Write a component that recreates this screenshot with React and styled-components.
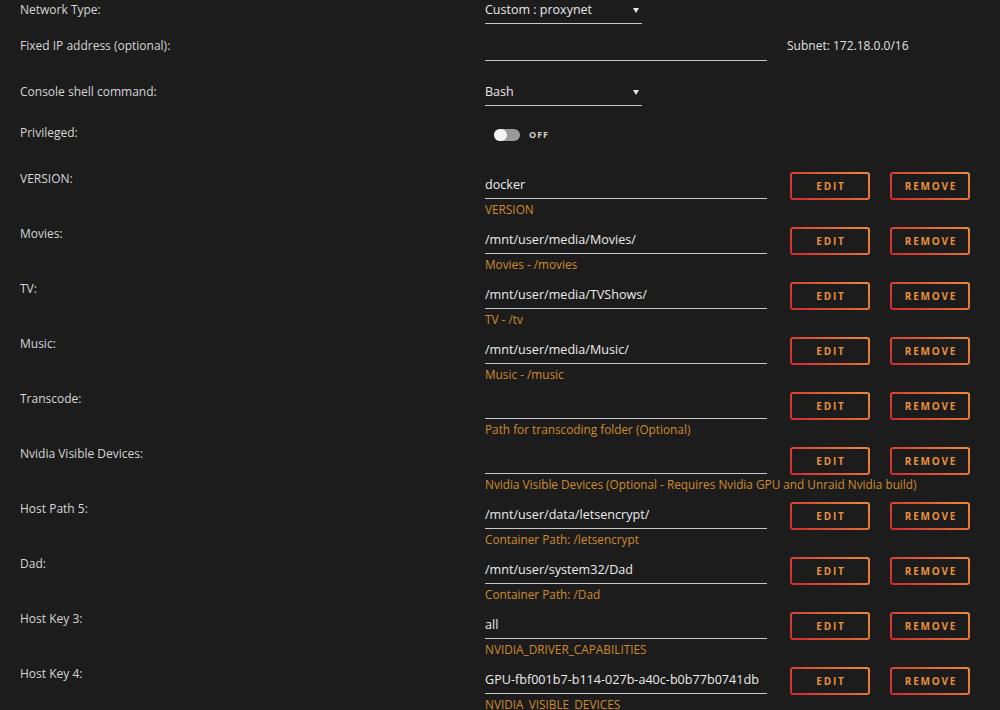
import React from 'react';
import styled, { createGlobalStyle } from 'styled-components';

const GlobalStyle = createGlobalStyle`
  body {
    margin: 0;
    background: #1c1c1c;
    font-family: 'Open Sans', 'DejaVu Sans', sans-serif;
    color: #d6d6d6;
  }
`;

const Page = styled.div`
  width: 1000px;
  height: 710px;
  overflow: hidden;
  background: #1c1c1c;
`;

const Row = styled.div`
  display: flex;
  align-items: flex-start;
  height: ${(p) => p.$h}px;
`;

const Label = styled.div`
  width: 485px;
  padding-left: 20px;
  box-sizing: border-box;
  font-size: 12px;
  line-height: 20px;
  color: #d6d6d6;
  flex-shrink: 0;
`;

const Field = styled.div`
  display: flex;
  flex-direction: column;
  width: ${(p) => p.$w || 282}px;
  flex-shrink: 0;
`;

const Select = styled.div`
  position: relative;
  width: 157px;
  height: 24px;
  box-sizing: border-box;
  border-bottom: 1px solid #c8c8c8;
  font-size: 12.5px;
  line-height: 20px;
  color: #e8e8e8;
  &::after {
    content: '';
    position: absolute;
    right: 3px;
    top: 8px;
    border-left: 3px solid transparent;
    border-right: 3px solid transparent;
    border-top: 5px solid #e8e8e8;
  }
`;

const Input = styled.div`
  height: ${(p) => p.$h || 30}px;
  box-sizing: border-box;
  padding-top: ${(p) => p.$pt ?? 6}px;
  border-bottom: 1px solid #c8c8c8;
  font-size: 12.6px;
  line-height: 20px;
  color: #ececec;
  white-space: nowrap;
`;

const Desc = styled.div`
  margin-top: 2px;
  font-size: 11.8px;
  line-height: 16px;
  color: #d08a2c;
  white-space: nowrap;
`;

const Subnet = styled.div`
  margin-left: 20px;
  font-size: 12px;
  line-height: 20px;
  color: #e0e0e0;
`;

const Toggle = styled.div`
  display: flex;
  align-items: center;
  gap: 9px;
  margin-left: 9px;
  margin-top: 5px;
`;

const Track = styled.div`
  position: relative;
  width: 26px;
  height: 12px;
  border-radius: 6px;
  background: #9a9a9a;
  &::before {
    content: '';
    position: absolute;
    left: 0;
    top: 0;
    width: 13px;
    height: 12px;
    border-radius: 6px;
    background: #f4f4f4;
  }
`;

const ToggleText = styled.span`
  font-size: 9px;
  font-weight: 700;
  letter-spacing: 1px;
  color: #d0d0d0;
`;

const Buttons = styled.div`
  display: flex;
  gap: 20px;
  margin-left: 23px;
  margin-top: 3px;
`;

const Btn = styled.div`
  width: 80px;
  height: 28px;
  box-sizing: border-box;
  border: 2px solid transparent;
  border-radius: 3px;
  background: linear-gradient(#1c1c1c, #1c1c1c) padding-box,
    linear-gradient(45deg, #d02a2e, #ec8a3a) border-box;
  display: flex;
  align-items: center;
  justify-content: center;
  font-size: 10px;
  font-weight: 700;
  letter-spacing: 1.8px;
  color: #e8913c;
  padding-left: 2px;
`;

const params = [
  ['VERSION:', 'docker', 'VERSION'],
  ['Movies:', '/mnt/user/media/Movies/', 'Movies - /movies'],
  ['TV:', '/mnt/user/media/TVShows/', 'TV - /tv'],
  ['Music:', '/mnt/user/media/Music/', 'Music - /music'],
  ['Transcode:', '', 'Path for transcoding folder (Optional)'],
  ['Nvidia Visible Devices:', '', 'Nvidia Visible Devices (Optional - Requires Nvidia GPU and Unraid Nvidia build)'],
  ['Host Path 5:', '/mnt/user/data/letsencrypt/', 'Container Path: /letsencrypt'],
  ['Dad:', '/mnt/user/system32/Dad', 'Container Path: /Dad'],
  ['Host Key 3:', 'all', 'NVIDIA_DRIVER_CAPABILITIES'],
  ['Host Key 4:', 'GPU-fbf001b7-b114-027b-a40c-b0b77b0741db', 'NVIDIA_VISIBLE_DEVICES'],
];

export default function App() {
  return (
    <Page>
      <GlobalStyle />
      <Row $h={36}>
        <Label>Network Type:</Label>
        <Field>
          <Select>Custom : proxynet</Select>
        </Field>
      </Row>
      <Row $h={46}>
        <Label>Fixed IP address (optional):</Label>
        <Field>
          <Input $h={25} $pt={0} />
        </Field>
        <Subnet>Subnet: 172.18.0.0/16</Subnet>
      </Row>
      <Row $h={41}>
        <Label>Console shell command:</Label>
        <Field>
          <Select>Bash</Select>
        </Field>
      </Row>
      <Row $h={46}>
        <Label>Privileged:</Label>
        <Toggle>
          <Track />
          <ToggleText>OFF</ToggleText>
        </Toggle>
      </Row>
      {params.map(([label, value, desc]) => (
        <Row $h={55} key={label}>
          <Label>{label}</Label>
          <Field>
            <Input>{value}</Input>
            <Desc>{desc}</Desc>
          </Field>
          <Buttons>
            <Btn>EDIT</Btn>
            <Btn>REMOVE</Btn>
          </Buttons>
        </Row>
      ))}
    </Page>
  );
}
